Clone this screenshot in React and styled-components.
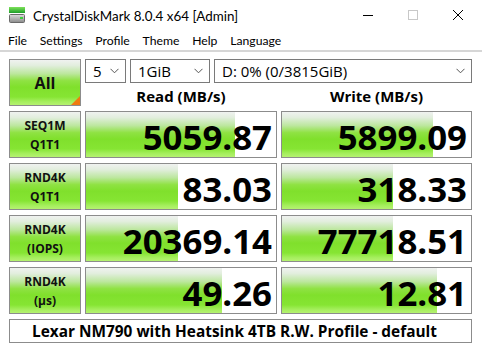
import React from "react";
import styled, { createGlobalStyle } from "styled-components";

const Global = createGlobalStyle`
  html, body { margin: 0; padding: 0; background: #fff; }
  body { font-family: "Lato", "Noto Sans", sans-serif; color: #000; }
`;

const Window = styled.div`
  width: 482px;
  height: 352px;
  background: #fff;
  display: flex;
  flex-direction: column;
  overflow: hidden;
`;

const TitleBar = styled.div`
  flex-shrink: 0;
  height: 30px;
  display: flex;
  align-items: center;
  padding-left: 9px;
  padding-right: 2px;
  font-size: 13.4px;
  color: #000;
`;

const TitleText = styled.span`
  margin-left: 8px;
  flex: 1;
  padding-top: 1px;
`;

const Caption = styled.div`
  width: 45px;
  height: 30px;
  display: flex;
  align-items: center;
  justify-content: center;
`;

const MenuBar = styled.div`
  flex-shrink: 0;
  height: 19px;
  display: flex;
  align-items: center;
  padding-left: 1.5px;
  padding-top: 1px;
  font-size: 12.2px;
  border-bottom: 2px solid #d6d6d6;
`;

const MenuItem = styled.span`
  padding: 0 6.4px;
`;

const Grid = styled.div`
  display: grid;
  grid-template-columns: 72px 192px 191px;
  grid-template-rows: 47px 47px 47px 47px 47px 24px;
  column-gap: 4px;
  row-gap: 5px;
  padding: 7px 0 0 9px;
`;

const greenGradient = `linear-gradient(to bottom,
  #f0f2f0 0%, #e2eede 12%, #bde79f 30%, #8fe243 46%, #80e02c 60%, #86e533 82%, #a4ee5c 92%, #b5f270 100%)`;

const LabelCell = styled.div`
  position: relative;
  box-sizing: border-box;
  border: 1px solid #8c8c8c;
  background: ${greenGradient};
  display: flex;
  flex-direction: column;
  align-items: center;
  justify-content: center;
  font-weight: 700;
  font-size: ${(p) => (p.$big ? "16px" : "12px")};
  line-height: ${(p) => (p.$big ? "1" : "19px")};
  color: #111;
  font-family: "Open Sans", "Noto Sans", sans-serif;
`;

const Corner = styled.div`
  position: absolute;
  right: 0;
  bottom: 0;
  width: 0;
  height: 0;
  border-left: 9px solid transparent;
  border-bottom: 9px solid #f07a10;
`;

const TopArea = styled.div`
  grid-column: 2 / span 2;
  display: flex;
  flex-direction: column;
`;

const ComboRow = styled.div`
  display: flex;
  gap: 4px;
  height: 24px;
`;

const Combo = styled.div`
  box-sizing: border-box;
  width: ${(p) => p.$w}px;
  height: 24px;
  border: 1px solid #7a7a7a;
  display: flex;
  align-items: center;
  padding: 0 6px 0 7px;
  font-size: 15px;
  font-family: "Open Sans", "Noto Sans", sans-serif;
  color: #000;
  background: #fff;
`;

const ComboText = styled.span`
  flex: 1;
  white-space: nowrap;
`;

const HeaderRow = styled.div`
  display: grid;
  grid-template-columns: 192px 191px;
  column-gap: 4px;
  height: 23px;
`;

const Header = styled.div`
  display: flex;
  align-items: center;
  justify-content: center;
  font-weight: 700;
  font-size: 15px;
  font-family: "Open Sans", "Noto Sans", sans-serif;
  padding-top: 2px;
`;

const ValueCell = styled.div`
  box-sizing: border-box;
  border: 1px solid #8c8c8c;
  background-color: #fff;
  background-image: ${greenGradient};
  background-repeat: no-repeat;
  display: flex;
  align-items: center;
  justify-content: flex-end;
  padding: 4px 4px 0 0;
  font-family: "Open Sans", "Noto Sans", sans-serif;
  font-weight: 700;
  font-size: 34.8px;
  color: #000;
`;

const Footer = styled.div`
  grid-column: 1 / span 3;
  box-sizing: border-box;
  height: 24px;
  border: 1px solid #8c8c8c;
  display: flex;
  align-items: center;
  justify-content: center;
  font-family: "Open Sans", "Noto Sans", sans-serif;
  font-weight: 700;
  font-size: 15.4px;
  padding-right: 12px;
`;

const Chevron = () => (
  <svg width="9" height="6" viewBox="0 0 9 6">
    <path d="M0.5 0.8 L4.5 4.8 L8.5 0.8" fill="none" stroke="#555" strokeWidth="1" />
  </svg>
);

const AppIcon = () => (
  <svg width="16" height="16" viewBox="0 0 16 16">
    <defs>
      <linearGradient id="gtop" x1="0" y1="0" x2="0" y2="1">
        <stop offset="0" stopColor="#7ee25a" />
        <stop offset="1" stopColor="#1e9e2a" />
      </linearGradient>
      <linearGradient id="gbody" x1="0" y1="0" x2="0" y2="1">
        <stop offset="0" stopColor="#dcdcdc" />
        <stop offset="1" stopColor="#8a8a8a" />
      </linearGradient>
    </defs>
    <rect x="0" y="0" width="16" height="6" fill="url(#gtop)" />
    <rect x="0.5" y="7.5" width="15" height="8" rx="1" fill="url(#gbody)" stroke="#6a6a6a" />
    <rect x="11" y="10" width="3" height="2" fill="#3ccf3c" />
  </svg>
);

const rows = [
  { l1: "SEQ1M", l2: "Q1T1", r: "5059.87", w: "5899.09", rw: 149, ww: 151 },
  { l1: "RND4K", l2: "Q1T1", r: "83.03", w: "318.33", rw: 92, ww: 111 },
  { l1: "RND4K", l2: "(IOPS)", r: "20369.14", w: "77718.51", rw: 92, ww: 111 },
  { l1: "RND4K", l2: "(µs)", r: "49.26", w: "12.81", rw: 136, ww: 155 },
];

export default function App() {
  return (
    <Window>
      <Global />
      <TitleBar>
        <AppIcon />
        <TitleText>CrystalDiskMark 8.0.4 x64 [Admin]</TitleText>
        <Caption>
          <svg width="10" height="10" viewBox="0 0 10 10">
            <path d="M0 5.5 H10" stroke="#000" strokeWidth="1" />
          </svg>
        </Caption>
        <Caption>
          <svg width="10" height="10" viewBox="0 0 10 10">
            <rect x="0.5" y="0.5" width="9" height="9" fill="none" stroke="#c8c8c8" />
          </svg>
        </Caption>
        <Caption>
          <svg width="10" height="10" viewBox="0 0 10 10">
            <path d="M0 0 L10 10 M10 0 L0 10" stroke="#000" strokeWidth="1" />
          </svg>
        </Caption>
      </TitleBar>
      <MenuBar>
        {["File", "Settings", "Profile", "Theme", "Help", "Language"].map((m) => (
          <MenuItem key={m}>{m}</MenuItem>
        ))}
      </MenuBar>
      <Grid>
        <LabelCell $big>
          All
          <Corner />
        </LabelCell>
        <TopArea>
          <ComboRow>
            <Combo $w={41}>
              <ComboText>5</ComboText>
              <Chevron />
            </Combo>
            <Combo $w={80}>
              <ComboText>1GiB</ComboText>
              <Chevron />
            </Combo>
            <Combo $w={258}>
              <ComboText>D: 0% (0/3815GiB)</ComboText>
              <Chevron />
            </Combo>
          </ComboRow>
          <HeaderRow>
            <Header>Read (MB/s)</Header>
            <Header>Write (MB/s)</Header>
          </HeaderRow>
        </TopArea>
        {rows.map((r, i) => (
          <React.Fragment key={i}>
            <LabelCell>
              <span>{r.l1}</span>
              <span>{r.l2}</span>
            </LabelCell>
            <ValueCell style={{ backgroundSize: `${r.rw}px 100%` }}>{r.r}</ValueCell>
            <ValueCell style={{ backgroundSize: `${r.ww}px 100%` }}>{r.w}</ValueCell>
          </React.Fragment>
        ))}
        <Footer>Lexar NM790 with Heatsink 4TB R.W. Profile - default</Footer>
      </Grid>
    </Window>
  );
}
